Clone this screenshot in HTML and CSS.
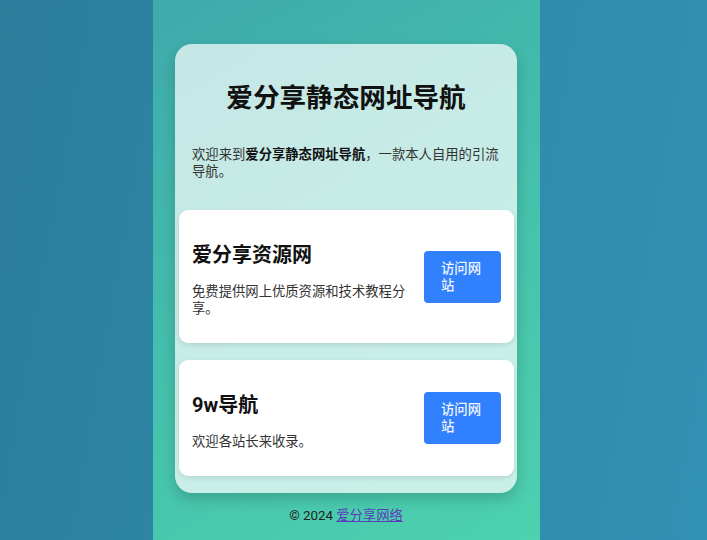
FILE: index.html
```html
<!DOCTYPE html>
<html lang="zh-CN">
<head>
<meta charset="utf-8">
<title>爱分享静态网址导航</title>
<link rel="stylesheet" href="styles.css">
</head>
<body>
<div class="page">
  <div class="card">
    <div class="header">
      <h1 class="title">爱分享静态网址导航</h1>
      <p class="intro">欢迎来到<strong>爱分享静态网址导航</strong>，一款本人自用的引流导航。</p>
    </div>
    <div class="item">
      <div class="item-text">
        <h3 class="item-title">爱分享资源网</h3>
        <p class="item-desc">免费提供网上优质资源和技术教程分享。</p>
      </div>
      <a class="btn" href="#">访问网站</a>
    </div>
    <div class="item">
      <div class="item-text">
        <h3 class="item-title">9w导航</h3>
        <p class="item-desc">欢迎各站长来收录。</p>
      </div>
      <a class="btn" href="#">访问网站</a>
    </div>
  </div>
  <footer class="footer">© 2024 <a class="footer-link" href="#">爱分享网络</a></footer>
</div>
</body>
</html>
```

FILE: styles.css
```css
html {
  background: linear-gradient(100deg, #2b7e9c 0%, #3391b3 100%);
  min-height: 100%;
}
body {
  margin: 0;
  font-family: Roboto, "Noto Sans CJK SC", sans-serif;
  font-size: 13.33px;
  color: #333;
}
.page {
  width: 387px;
  margin-left: 153px;
  min-height: 540px;
  background: linear-gradient(150deg, #3eaaab 0%, #45c2ad 55%, #4dd1ae 100%);
  padding: 44px 23px 0 22px;
  box-sizing: border-box;
}
.card {
  background: rgba(255, 255, 255, 0.7);
  border-radius: 17px;
  padding: 4px 3px 17px 4px;
  box-shadow: 0 6px 14px rgba(0, 0, 0, 0.18);
}
.header {
  padding: 0 14px 0 13px;
}
.title {
  margin: 34px 0 0;
  font-size: 26.6px;
  line-height: 32px;
  font-weight: bold;
  color: #111;
  text-align: center;
}
.intro {
  margin: 32px 0 30px;
  line-height: 17px;
  color: #333;
}
.intro strong {
  color: #111;
}
.item {
  display: flex;
  align-items: center;
  gap: 15px;
  background: #fff;
  border-radius: 9px;
  padding: 13px;
  margin-bottom: 17px;
  box-shadow: 0 2px 5px rgba(0, 0, 0, 0.1);
}
.item:last-child {
  margin-bottom: 0;
}
.item-text {
  flex: 1;
  min-width: 0;
}
.item-title {
  margin: 20px 0 16px;
  font-size: 20px;
  line-height: 24px;
  font-weight: bold;
  color: #111;
}
.item-desc {
  margin: 0 0 13px;
  line-height: 17px;
  color: #333;
}
.btn {
  flex: none;
  width: 77px;
  box-sizing: border-box;
  padding: 9px 18px 9px 17px;
  background: #3180fe;
  color: #f2f6ff;
  border-radius: 4px;
  text-decoration: none;
  line-height: 17px;
  font-size: 13.33px;
  font-weight: 500;
}
.footer {
  text-align: center;
  padding: 14px 0 16px;
  line-height: 17px;
  color: #222;
}
.footer-link {
  color: #5a3cb8;
}
```
